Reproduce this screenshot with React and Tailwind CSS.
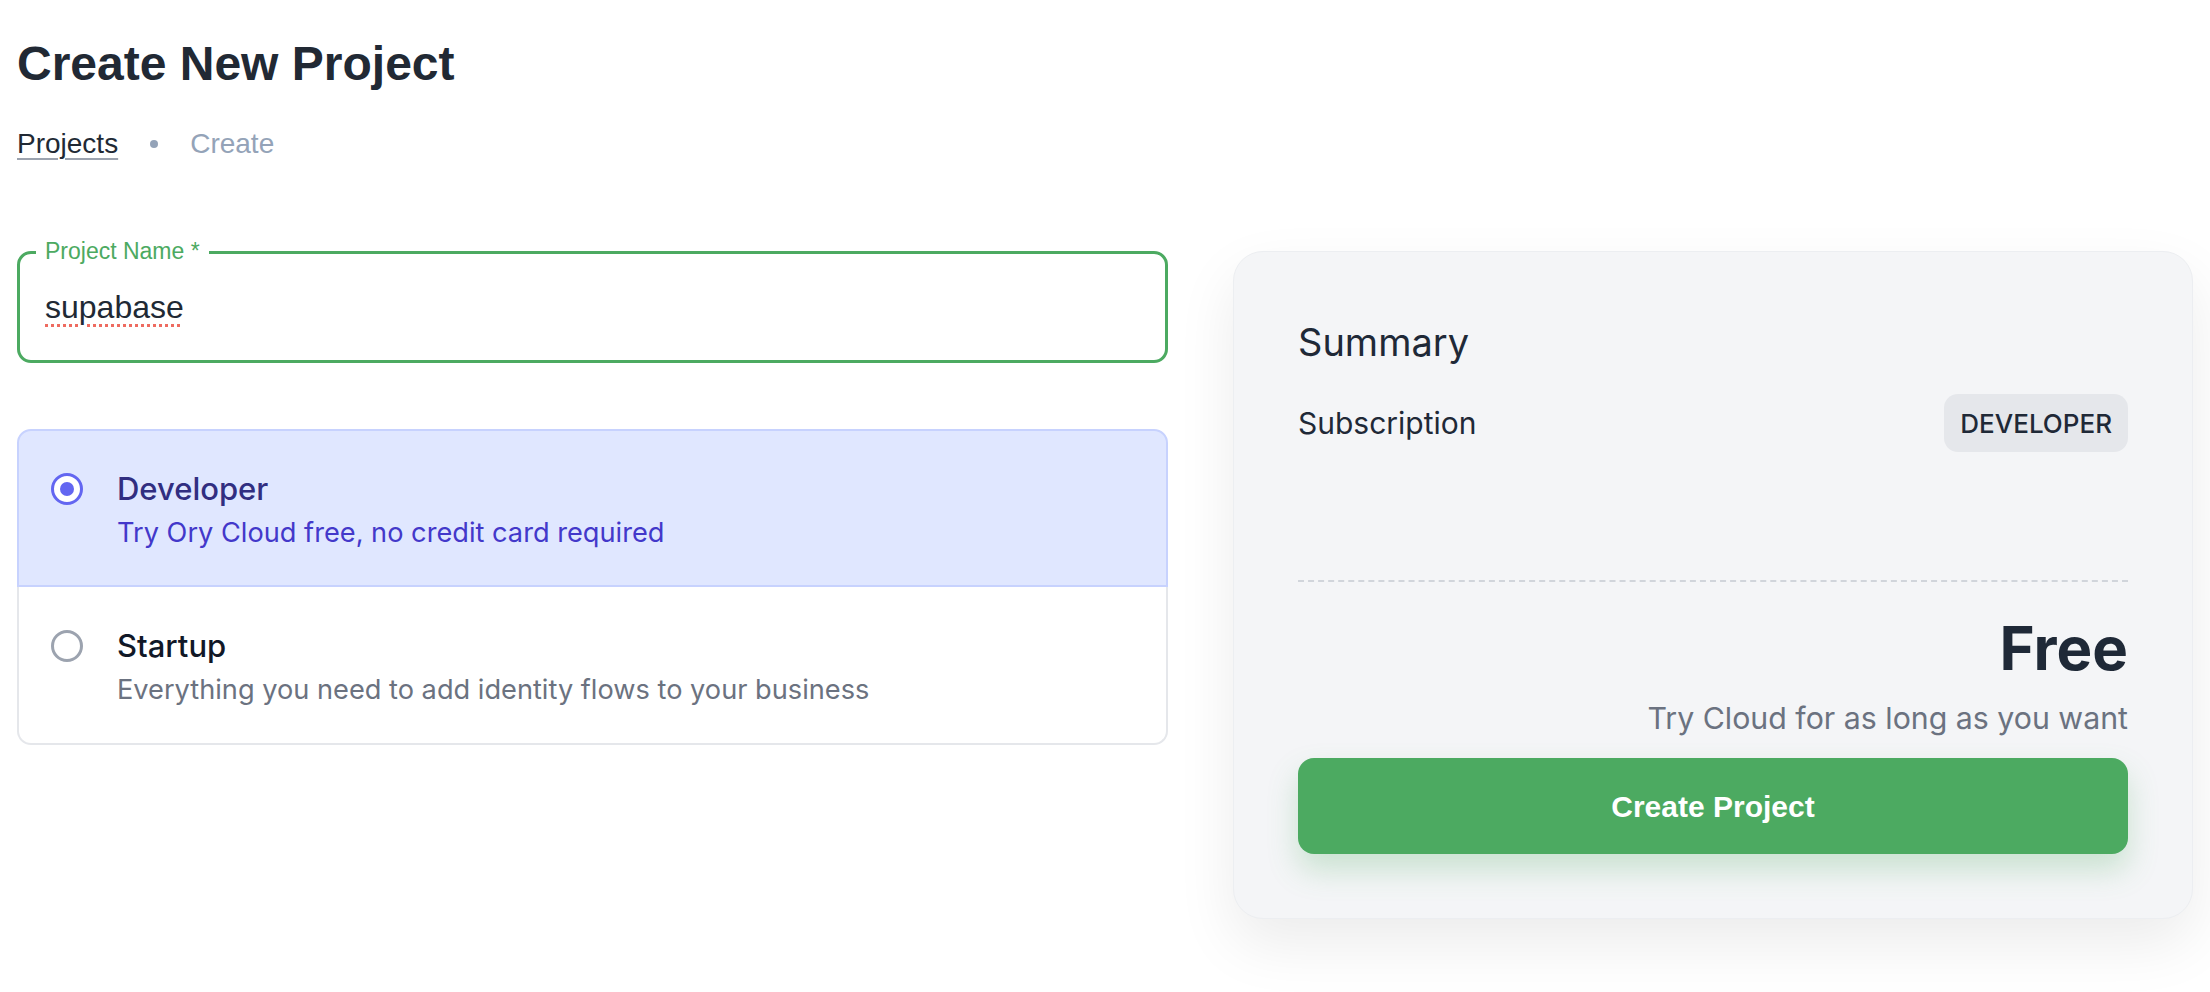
export default function App() {
  const plans = [
    { id: "developer", name: "Developer", desc: "Try Ory Cloud free, no credit card required", checked: true },
    { id: "startup", name: "Startup", desc: "Everything you need to add identity flows to your business", checked: false },
  ];

  return (
    <div className="min-h-screen bg-white px-[17px] pt-[36px]">
      <h1 className="font-['Liberation_Sans',Arial,sans-serif] text-[48px] font-bold leading-[56px] text-[#212934]">
        Create New Project
      </h1>

      <nav className="mt-[32px] flex items-center font-['Liberation_Sans',Arial,sans-serif] text-[28px] leading-[40px]">
        <a className="text-[#212934] underline decoration-[#9ca3af] decoration-2 underline-offset-[5px]">Projects</a>
        <span className="mx-[32px] h-[8px] w-[8px] rounded-full bg-[#94a3b8]" />
        <span className="text-[#94a3b8]">Create</span>
      </nav>

      <div className="mt-[87px] flex gap-[65px]">
        {/* left column */}
        <div className="flex-1">
          <div className="relative flex h-[112px] items-center rounded-[14px] border-[3px] border-[#4caa61] px-[25px]">
            <span className="absolute left-[16px] top-[-15px] bg-white px-[9px] font-['Liberation_Sans',Arial,sans-serif] text-[23px] leading-[24px] text-[#4caa61]">
              Project Name *
            </span>
            <span className="font-['Liberation_Sans',Arial,sans-serif] text-[32px] text-[#212934] underline decoration-[#ee6b60] decoration-dotted decoration-[3px] underline-offset-[6px]">
              supabase
            </span>
          </div>

          <div className="mt-[66px] font-['Inter',sans-serif]">
            {plans.map((p) => (
              <div
                key={p.id}
                className={
                  p.checked
                    ? "flex h-[158px] items-center rounded-t-[14px] border-2 border-[#c7d2fe] bg-[#e0e7ff] px-[32px] pt-[6px]"
                    : "flex h-[158px] items-center rounded-b-[14px] border-2 border-t-0 border-[#e5e7eb] bg-white px-[32px] pt-[6px]"
                }
              >
                <div className="flex items-start">
                  <div className="flex h-[44px] items-center">
                    {p.checked ? (
                      <span className="flex h-[32px] w-[32px] items-center justify-center rounded-full border-[3px] border-[#6366f1] bg-white">
                        <span className="h-[14px] w-[14px] rounded-full bg-[#6366f1]" />
                      </span>
                    ) : (
                      <span className="h-[32px] w-[32px] rounded-full border-[3px] border-[#9ca3af] bg-white" />
                    )}
                  </div>
                  <div className="ml-[34px]">
                    <p className={`text-[31px] font-medium leading-[44px] ${p.checked ? "text-[#312e81]" : "text-[#111827]"}`}>
                      {p.name}
                    </p>
                    <p className={`text-[27.2px] leading-[44px] ${p.checked ? "text-[#4338ca]" : "text-[#6b7280]"}`}>
                      {p.desc}
                    </p>
                  </div>
                </div>
              </div>
            ))}
          </div>
        </div>

        {/* summary card */}
        <div className="w-[960px] rounded-[30px] border border-[#eceef1] bg-[#f4f5f7] px-[64px] pb-[64px] pt-[62px] font-['Inter',sans-serif] shadow-[0_25px_60px_rgba(0,0,0,0.08)]">
          <h2 className="text-[38px] leading-[56px] text-[#1f2937]">Summary</h2>
          <div className="mt-[24px] flex items-center justify-between">
            <span className="text-[30px] text-[#1f2937]">Subscription</span>
            <span className="flex h-[58px] items-center rounded-[14px] bg-[#e5e7eb] px-[16px] text-[26px] font-medium text-[#1f2937]">
              DEVELOPER
            </span>
          </div>
          <div className="mt-[128px] border-t-2 border-dashed border-[#d1d5db]" />
          <p className="mt-[30px] text-right text-[60px] font-bold leading-[72px] text-[#1f2937]">Free</p>
          <p className="mt-[14px] text-right text-[30.3px] leading-[40px] text-[#6b7280]">Try Cloud for as long as you want</p>
          <button className="mt-[20px] flex h-[96px] w-full items-center justify-center rounded-[16px] bg-[#4caa61] font-['Liberation_Sans',Arial,sans-serif] text-[30px] font-bold text-white shadow-[0_16px_30px_rgba(76,170,97,0.25)]">
            Create Project
          </button>
        </div>
      </div>
    </div>
  );
}
